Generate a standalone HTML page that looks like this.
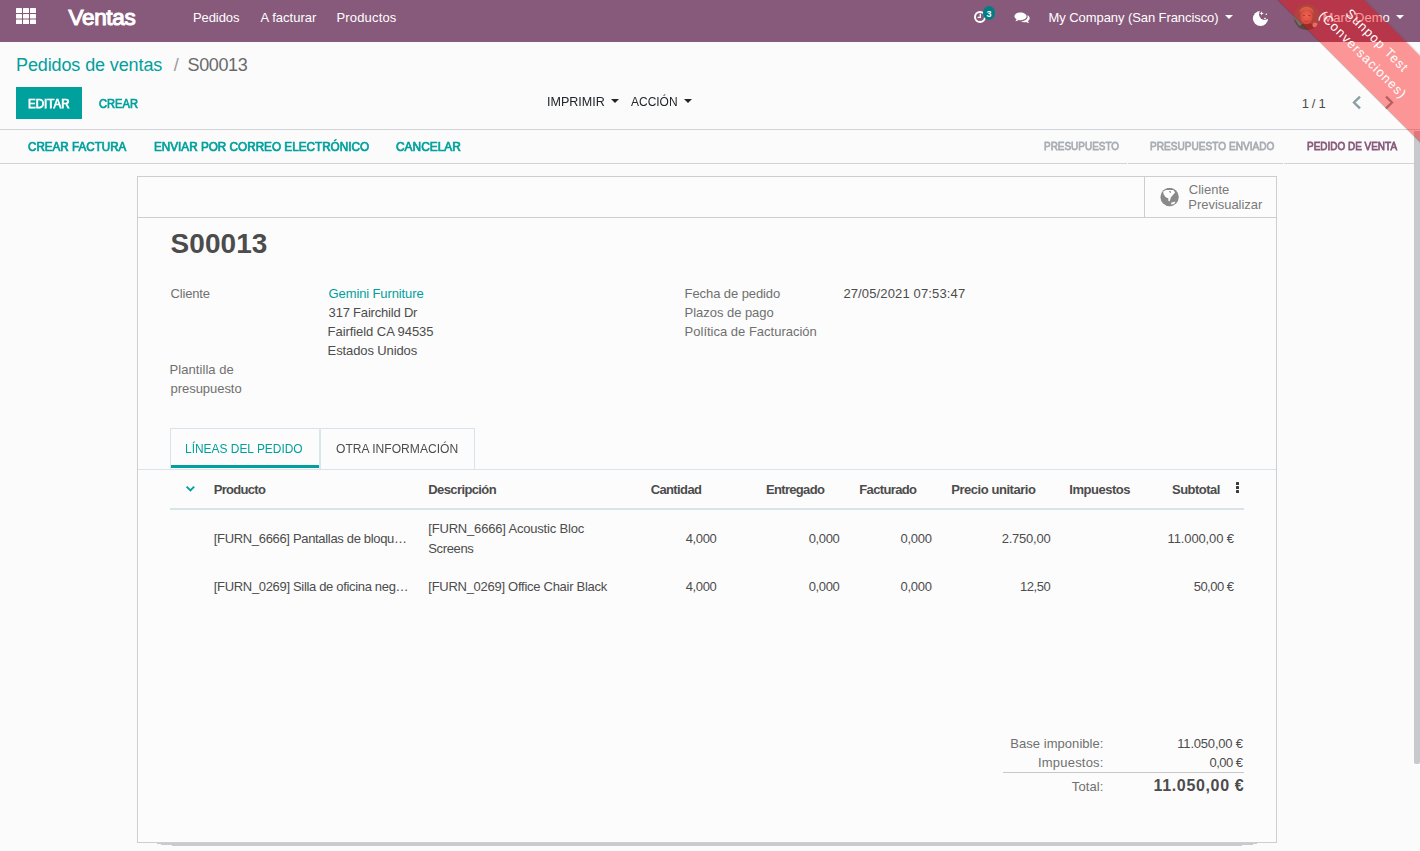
<!DOCTYPE html>
<html><head><meta charset="utf-8">
<style>
*{box-sizing:border-box;margin:0;padding:0}
html,body{width:1420px;height:851px;overflow:hidden;background:#fbfbfb;font-family:"Liberation Sans",sans-serif;font-size:13px;color:#4c4c4c}
.t{position:absolute;white-space:nowrap}
.b{position:absolute}
#nav{position:absolute;left:0;top:0;width:1420px;height:42px;background:#875a7b}
.caret{position:absolute;width:0;height:0;border-left:4px solid transparent;border-right:4px solid transparent;border-top:4px solid currentColor}
#ribbon{position:absolute;left:1170px;top:18.3px;width:400px;height:61.4px;transform:rotate(45deg);transform-origin:200px 29.7px;background:rgba(255,0,0,0.4);box-shadow:0 0 1.5px rgba(0,20,30,0.35);color:#fff;text-align:center;font-size:13px;line-height:20px;letter-spacing:1px;padding-top:9.7px;z-index:10}
</style></head><body>
<div id="nav"></div>
<!-- apps grid -->
<svg class="b" style="left:16px;top:8px" width="20" height="16" viewBox="0 0 20 16"><g fill="#fff"><rect x="0" y="0" width="6" height="5" rx="0.6"/><rect x="7" y="0" width="6" height="5" rx="0.6"/><rect x="14" y="0" width="6" height="5" rx="0.6"/><rect x="0" y="6" width="6" height="4.5" rx="0.6"/><rect x="7" y="6" width="6" height="4.5" rx="0.6"/><rect x="14" y="6" width="6" height="4.5" rx="0.6"/><rect x="0" y="11.6" width="6" height="4.4" rx="0.6"/><rect x="7" y="11.6" width="6" height="4.4" rx="0.6"/><rect x="14" y="11.6" width="6" height="4.4" rx="0.6"/></g></svg>
<!-- activity clock + badge -->
<svg class="b" style="left:972px;top:4px" width="26" height="22" viewBox="0 0 26 22">
  <circle cx="8" cy="13" r="5" fill="none" stroke="#fff" stroke-width="2"/>
  <path d="M8.3 9.8 V13.3 H5.6" fill="none" stroke="#fff" stroke-width="1.3"/>
  <ellipse cx="17" cy="9" rx="6.1" ry="7" fill="#017e84"/>
  <text x="17" y="12.6" font-family="Liberation Sans" font-weight="bold" font-size="9" fill="#fff" text-anchor="middle">3</text>
</svg>
<!-- chat -->
<svg class="b" style="left:1014px;top:11.8px" width="16" height="12" viewBox="0 0 16 13" preserveAspectRatio="none">
  <path d="M6.5 0.5 C10 0.5 12.6 2.4 12.6 4.7 C12.6 7 10 8.9 6.5 8.9 C5.8 8.9 5.2 8.8 4.6 8.7 C3.6 9.5 2.3 9.9 1.2 10 C2 9.3 2.4 8.6 2.5 7.9 C1.3 7.1 0.4 6 0.4 4.7 C0.4 2.4 3 0.5 6.5 0.5 Z" fill="#fff"/>
  <path d="M13.4 3.6 C14.9 4.4 15.7 5.6 15.7 6.9 C15.7 8.1 15 9.1 13.9 9.8 C14 10.6 14.5 11.4 15.2 12 C14.1 11.9 12.9 11.4 12 10.8 C11.4 11 10.8 11 10.2 11 C8.9 11 7.7 10.7 6.8 10.2 C10.6 10.1 13.6 7.8 13.6 4.9 C13.6 4.4 13.5 4 13.4 3.6 Z" fill="#fff"/>
</svg>
<div class="caret" style="left:1225px;top:15px;color:#fff"></div>
<!-- moon -->
<svg class="b" style="left:1250px;top:8px" width="22" height="22" viewBox="0 0 22 22">
  <defs><mask id="mm"><rect width="22" height="22" fill="#fff"/><circle cx="14.6" cy="6.3" r="5.6" fill="#000"/></mask></defs>
  <circle cx="10.5" cy="10.5" r="7.6" fill="#fff" mask="url(#mm)"/>
  <path d="M11.6 3.3 L12.2 4.8 L13.7 5.4 L12.2 6 L11.6 7.5 L11 6 L9.5 5.4 L11 4.8 Z" fill="#fff"/>
  <circle cx="16.3" cy="6.2" r="0.8" fill="#fff"/>
  <path d="M15 9.3 L15.4 10.1 L16.2 10.5 L15.4 10.9 L15 11.7 L14.6 10.9 L13.8 10.5 L14.6 10.1 Z" fill="#fff"/>
</svg>
<!-- avatar -->
<svg class="b" style="left:1294px;top:4px" width="26" height="26" viewBox="0 0 26 26">
  <defs><clipPath id="av"><circle cx="13" cy="13" r="13"/></clipPath>
  <radialGradient id="fg" cx="0.5" cy="0.45" r="0.55"><stop offset="0" stop-color="#e0a58c"/><stop offset="1" stop-color="#b97a62"/></radialGradient></defs>
  <g clip-path="url(#av)">
    <rect width="26" height="26" fill="#7d6f66"/>
    <path d="M0 14 L8 26 L0 26 Z" fill="#4f4a46"/>
    <path d="M3 26 Q6 19 13 19 Q20 19 24 26 Z" fill="#5a4742"/>
    <ellipse cx="12.5" cy="12.5" rx="6.2" ry="7.8" fill="url(#fg)"/>
    <path d="M5.5 10 Q5 3 12.5 2.5 Q20 3 19.5 10 Q18 5.5 12.5 5.5 Q7 5.5 5.5 10 Z" fill="#c49a72"/>
    <path d="M8.5 11.5 h2.5 M14 11.5 h2.5" stroke="#8a5a48" stroke-width="0.9"/>
    <path d="M10.5 17 q2 1 4 0" stroke="#9a5a4a" stroke-width="0.8" fill="none"/>
    <circle cx="21" cy="21" r="2.5" fill="#d9b3b0"/>
  </g>
</svg>
<div class="caret" style="left:1396px;top:15px;color:#fff"></div>

<!-- control panel lines -->
<div class="b" style="left:0;top:129px;width:1420px;height:1px;background:#d2d3d6"></div>
<div class="b" style="left:0;top:163px;width:1420px;height:1px;background:#d2d3d6"></div>
<div class="b" style="left:1127px;top:163px;width:1px;height:1px;background:#fbfbfb"></div>
<div class="b" style="left:1283px;top:163px;width:1px;height:1px;background:#fbfbfb"></div>
<div class="b" style="left:16px;top:87px;width:66px;height:32px;background:#00a09d"></div>
<div class="caret" style="left:611px;top:99px;color:#212529"></div>
<div class="caret" style="left:684px;top:99px;color:#212529"></div>
<!-- pager chevrons -->
<svg class="b" style="left:1350px;top:95px" width="14" height="15" viewBox="0 0 14 15">
  <path d="M10 1.6 L4 7.5 L10 13.4" fill="none" stroke="#88a0a4" stroke-width="2.4"/>
</svg>
<svg class="b" style="left:1382px;top:95px" width="14" height="15" viewBox="0 0 14 15">
  <path d="M4 1.6 L10 7.5 L4 13.4" fill="none" stroke="#88a0a4" stroke-width="2.4"/>
</svg>

<!-- sheet -->
<div class="b" style="left:157px;top:843px;width:1100px;height:1px;background:#c9cacf"></div>
<div class="b" style="left:161px;top:844px;width:1092px;height:1px;background:#c9cacf"></div>
<div class="b" style="left:172px;top:845px;width:1070px;height:1px;background:#c9cacf"></div>
<div class="b" style="left:137px;top:176px;width:1140px;height:667px;background:#fcfcfc;border:1px solid #cdced2"></div>
<div class="b" style="left:138px;top:217px;width:1138px;height:1px;background:#cdced2"></div>
<div class="b" style="left:1144px;top:177px;width:1px;height:40px;background:#cdced2"></div>
<!-- globe -->
<svg class="b" style="left:1160px;top:188px" width="20" height="19" viewBox="0 0 20 19">
  <circle cx="9.6" cy="9" r="9.2" fill="#8a8a8a"/>
  <path d="M3.2 3.6 L5.9 1.9 L13.4 1.9 L15.1 4.5 L10.8 9.5 L10.5 10.8 L9.5 13.4 L8.2 12.4 L8.5 10.5 L5.5 9.1 L3.5 5.9 Z" fill="#fff"/>
  <ellipse cx="10.1" cy="3.9" rx="1.1" ry="0.7" fill="#8a8a8a" transform="rotate(30 10.1 3.9)"/>
  <path d="M11.1 14.7 L15.4 13.6 L14.6 15.5 L11.5 16.8 Z" fill="#fff"/>
</svg>
<!-- tabs -->
<div class="b" style="left:138px;top:469px;width:1138px;height:1px;background:#d8e4ea"></div>
<div class="b" style="left:170px;top:428px;width:305px;height:1px;background:#d8e4ea"></div>
<div class="b" style="left:170px;top:428px;width:1px;height:41px;background:#d8e4ea"></div>
<div class="b" style="left:319px;top:428px;width:2px;height:41px;background:#dbe6eb"></div>
<div class="b" style="left:474px;top:428px;width:1px;height:41px;background:#d8e4ea"></div>
<div class="b" style="left:171px;top:465px;width:148px;height:3px;background:#00a09d"></div>
<!-- table header -->
<svg class="b" style="left:184px;top:484px" width="12" height="10" viewBox="0 0 12 10">
  <path d="M2.6 2.6 L6.4 6.4 L10.2 2.6" fill="none" stroke="#00a09d" stroke-width="1.8"/>
</svg>
<div class="b" style="left:170px;top:508px;width:1074px;height:2px;background:#d8e5e8"></div>
<div class="b" style="left:1236px;top:482px;width:3px;height:3px;background:#3a3a3a;border-radius:0.5px"></div>
<div class="b" style="left:1236px;top:486px;width:3px;height:3px;background:#3a3a3a;border-radius:0.5px"></div>
<div class="b" style="left:1236px;top:490px;width:3px;height:3px;background:#3a3a3a;border-radius:0.5px"></div>
<!-- totals line -->
<div class="b" style="left:1003px;top:772px;width:241px;height:1px;background:#c8c8c8"></div>
<!-- scrollbar -->
<div class="b" style="left:1414px;top:131px;width:6px;height:633px;background:#c8c9cd;border-radius:0 0 2px 2px"></div>

<div class="t" style="left:68.55px;top:1.00px;font-size:22.5px;line-height:34px;color:#ffffff;letter-spacing:-0.331px;-webkit-text-stroke:1.1px #ffffff">Ventas</div>
<div class="t" style="left:192.90px;top:8.00px;font-size:13px;line-height:20px;color:#ffffff;letter-spacing:-0.063px">Pedidos</div>
<div class="t" style="left:260.60px;top:8.00px;font-size:13px;line-height:20px;color:#ffffff;letter-spacing:0.008px">A facturar</div>
<div class="t" style="left:336.50px;top:8.00px;font-size:13px;line-height:20px;color:#ffffff;letter-spacing:0.159px">Productos</div>
<div class="t" style="left:1048.60px;top:8.00px;font-size:13px;line-height:20px;color:#ffffff;letter-spacing:-0.080px">My Company (San Francisco)</div>
<div class="t" style="left:1322.40px;top:8.00px;font-size:13px;line-height:20px;color:#ffffff;letter-spacing:0.019px">Marc Demo</div>
<div class="t" style="left:16.00px;top:52.00px;font-size:18px;line-height:27px;color:#00a09d;letter-spacing:-0.113px">Pedidos de ventas</div>
<div class="t" style="left:173.70px;top:52.00px;font-size:18px;line-height:27px;color:#9a9a9a">/</div>
<div class="t" style="left:187.50px;top:52.00px;font-size:18px;line-height:27px;color:#6a6a6a;letter-spacing:-0.370px">S00013</div>
<div class="t" style="left:28.36px;top:95.00px;font-size:12px;line-height:18px;color:#ffffff;-webkit-text-stroke:0.75px #ffffff;transform:scaleX(0.9661);transform-origin:0 0">EDITAR</div>
<div class="t" style="left:98.62px;top:95.00px;font-size:12px;line-height:18px;color:#00a09d;-webkit-text-stroke:0.7px #00a09d;transform:scaleX(0.9270);transform-origin:0 0">CREAR</div>
<div class="t" style="left:546.74px;top:92.00px;font-size:13px;line-height:20px;color:#212529;transform:scaleX(0.9649);transform-origin:0 0">IMPRIMIR</div>
<div class="t" style="left:631.00px;top:92.00px;font-size:13px;line-height:20px;color:#212529;transform:scaleX(0.9209);transform-origin:0 0">ACCIÓN</div>
<div class="t" style="left:1301.70px;top:94.00px;font-size:13px;line-height:20px;color:#4c4c4c;letter-spacing:-0.341px">1 / 1</div>
<div class="t" style="left:28.44px;top:138.00px;font-size:12px;line-height:18px;color:#00a09d;-webkit-text-stroke:0.7px #00a09d;transform:scaleX(0.9702);transform-origin:0 0">CREAR FACTURA</div>
<div class="t" style="left:154.14px;top:138.00px;font-size:12px;line-height:18px;color:#00a09d;-webkit-text-stroke:0.7px #00a09d;transform:scaleX(0.9773);transform-origin:0 0">ENVIAR POR CORREO ELECTRÓNICO</div>
<div class="t" style="left:396.25px;top:138.00px;font-size:12px;line-height:18px;color:#00a09d;-webkit-text-stroke:0.7px #00a09d;transform:scaleX(0.9927);transform-origin:0 0">CANCELAR</div>
<div class="t" style="left:1043.75px;top:137.00px;font-size:11.5px;line-height:18px;color:#a9aeb4;-webkit-text-stroke:0.8px #a9aeb4;transform:scaleX(0.8657);transform-origin:0 0">PRESUPUESTO</div>
<div class="t" style="left:1150.45px;top:137.00px;font-size:11.5px;line-height:18px;color:#a9aeb4;-webkit-text-stroke:0.8px #a9aeb4;transform:scaleX(0.8778);transform-origin:0 0">PRESUPUESTO ENVIADO</div>
<div class="t" style="left:1306.85px;top:137.00px;font-size:11.5px;line-height:18px;color:#875a7b;-webkit-text-stroke:0.8px #875a7b;transform:scaleX(0.8661);transform-origin:0 0">PEDIDO DE VENTA</div>
<div class="t" style="left:1188.80px;top:180.00px;font-size:13px;line-height:20px;color:#7a7a7a">Cliente</div>
<div class="t" style="left:1188.30px;top:195.00px;font-size:13px;line-height:20px;color:#7a7a7a;letter-spacing:-0.032px">Previsualizar</div>
<div class="t" style="left:170.60px;top:223.00px;font-size:28px;line-height:42px;color:#4c4c4c;font-weight:bold;letter-spacing:0.047px">S00013</div>
<div class="t" style="left:170.60px;top:284.00px;font-size:13px;line-height:20px;color:#707070;letter-spacing:-0.189px">Cliente</div>
<div class="t" style="left:169.60px;top:360.00px;font-size:13px;line-height:20px;color:#707070;letter-spacing:0.058px">Plantilla de</div>
<div class="t" style="left:170.60px;top:379.00px;font-size:13px;line-height:20px;color:#707070;letter-spacing:-0.052px">presupuesto</div>
<div class="t" style="left:328.60px;top:284.00px;font-size:13px;line-height:20px;color:#00a09d;letter-spacing:-0.119px">Gemini Furniture</div>
<div class="t" style="left:328.60px;top:303.00px;font-size:13px;line-height:20px;color:#4c4c4c;letter-spacing:-0.195px">317 Fairchild Dr</div>
<div class="t" style="left:327.60px;top:322.00px;font-size:13px;line-height:20px;color:#4c4c4c;letter-spacing:-0.061px">Fairfield CA 94535</div>
<div class="t" style="left:327.60px;top:341.00px;font-size:13px;line-height:20px;color:#4c4c4c;letter-spacing:-0.112px">Estados Unidos</div>
<div class="t" style="left:684.60px;top:284.00px;font-size:13px;line-height:20px;color:#707070;letter-spacing:-0.087px">Fecha de pedido</div>
<div class="t" style="left:843.40px;top:284.00px;font-size:13px;line-height:20px;color:#4c4c4c;letter-spacing:0.136px">27/05/2021 07:53:47</div>
<div class="t" style="left:684.60px;top:303.00px;font-size:13px;line-height:20px;color:#707070;letter-spacing:-0.038px">Plazos de pago</div>
<div class="t" style="left:684.60px;top:322.00px;font-size:13px;line-height:20px;color:#707070">Política de Facturación</div>
<div class="t" style="left:185.34px;top:440.00px;font-size:12.5px;line-height:19px;color:#00a09d;transform:scaleX(0.9550);transform-origin:0 0">LÍNEAS DEL PEDIDO</div>
<div class="t" style="left:336.10px;top:440.00px;font-size:12.5px;line-height:19px;color:#4c4c4c;transform:scaleX(0.9665);transform-origin:0 0">OTRA INFORMACIÓN</div>
<div class="t" style="left:213.80px;top:480.00px;font-size:13px;line-height:20px;color:#4c4c4c;font-weight:bold;letter-spacing:-0.702px">Producto</div>
<div class="t" style="left:428.30px;top:480.00px;font-size:13px;line-height:20px;color:#4c4c4c;font-weight:bold;letter-spacing:-0.607px">Descripción</div>
<div class="t" style="left:650.70px;top:480.00px;font-size:13px;line-height:20px;color:#4c4c4c;font-weight:bold;letter-spacing:-0.624px">Cantidad</div>
<div class="t" style="left:766.10px;top:480.00px;font-size:13px;line-height:20px;color:#4c4c4c;font-weight:bold;letter-spacing:-0.693px">Entregado</div>
<div class="t" style="left:859.30px;top:480.00px;font-size:13px;line-height:20px;color:#4c4c4c;font-weight:bold;letter-spacing:-0.638px">Facturado</div>
<div class="t" style="left:951.20px;top:480.00px;font-size:13px;line-height:20px;color:#4c4c4c;font-weight:bold;letter-spacing:-0.448px">Precio unitario</div>
<div class="t" style="left:1069.30px;top:480.00px;font-size:13px;line-height:20px;color:#4c4c4c;font-weight:bold;letter-spacing:-0.473px">Impuestos</div>
<div class="t" style="left:1172.00px;top:480.00px;font-size:13px;line-height:20px;color:#4c4c4c;font-weight:bold;letter-spacing:-0.512px">Subtotal</div>
<div class="t" style="left:213.80px;top:529.00px;font-size:13px;line-height:20px;color:#4c4c4c;letter-spacing:-0.329px">[FURN_6666] Pantallas de bloqu…</div>
<div class="t" style="left:428.30px;top:519.00px;font-size:13px;line-height:20px;color:#4c4c4c;letter-spacing:-0.188px">[FURN_6666] Acoustic Bloc</div>
<div class="t" style="left:428.30px;top:539.00px;font-size:13px;line-height:20px;color:#4c4c4c;letter-spacing:-0.365px">Screens</div>
<div class="t" style="left:685.70px;top:529.00px;font-size:13px;line-height:20px;color:#4c4c4c;letter-spacing:-0.375px">4,000</div>
<div class="t" style="left:808.70px;top:529.00px;font-size:13px;line-height:20px;color:#4c4c4c;letter-spacing:-0.375px">0,000</div>
<div class="t" style="left:900.50px;top:529.00px;font-size:13px;line-height:20px;color:#4c4c4c;letter-spacing:-0.275px">0,000</div>
<div class="t" style="left:1001.70px;top:529.00px;font-size:13px;line-height:20px;color:#4c4c4c;letter-spacing:-0.225px">2.750,00</div>
<div class="t" style="left:1167.60px;top:529.00px;font-size:13px;line-height:20px;color:#4c4c4c;letter-spacing:-0.138px">11.000,00 €</div>
<div class="t" style="left:685.70px;top:577.00px;font-size:13px;line-height:20px;color:#4c4c4c;letter-spacing:-0.375px">4,000</div>
<div class="t" style="left:808.70px;top:577.00px;font-size:13px;line-height:20px;color:#4c4c4c;letter-spacing:-0.375px">0,000</div>
<div class="t" style="left:900.50px;top:577.00px;font-size:13px;line-height:20px;color:#4c4c4c;letter-spacing:-0.275px">0,000</div>
<div class="t" style="left:1020.00px;top:577.00px;font-size:13px;line-height:20px;color:#4c4c4c;letter-spacing:-0.450px">12,50</div>
<div class="t" style="left:1193.70px;top:577.00px;font-size:13px;line-height:20px;color:#4c4c4c;letter-spacing:-0.524px">50,00 €</div>
<div class="t" style="left:213.80px;top:577.00px;font-size:13px;line-height:20px;color:#4c4c4c;letter-spacing:-0.326px">[FURN_0269] Silla de oficina neg…</div>
<div class="t" style="left:428.30px;top:577.00px;font-size:13px;line-height:20px;color:#4c4c4c;letter-spacing:-0.272px">[FURN_0269] Office Chair Black</div>
<div class="t" style="left:1010.30px;top:734.00px;font-size:13px;line-height:20px;color:#707070;letter-spacing:0.044px">Base imponible:</div>
<div class="t" style="left:1177.30px;top:734.00px;font-size:13px;line-height:20px;color:#4c4c4c;letter-spacing:-0.198px">11.050,00 €</div>
<div class="t" style="left:1038.00px;top:753.00px;font-size:13px;line-height:20px;color:#707070;letter-spacing:0.203px">Impuestos:</div>
<div class="t" style="left:1209.60px;top:753.00px;font-size:13px;line-height:20px;color:#4c4c4c;letter-spacing:-0.543px">0,00 €</div>
<div class="t" style="left:1071.80px;top:777.00px;font-size:13px;line-height:20px;color:#707070;letter-spacing:0.108px">Total:</div>
<div class="t" style="left:1153.50px;top:774.00px;font-size:16px;line-height:24px;color:#4c4c4c;font-weight:bold;letter-spacing:0.656px">11.050,00 €</div>

<div id="ribbon">Sunpop Test<br>(Conversaciones)</div>
</body></html>
